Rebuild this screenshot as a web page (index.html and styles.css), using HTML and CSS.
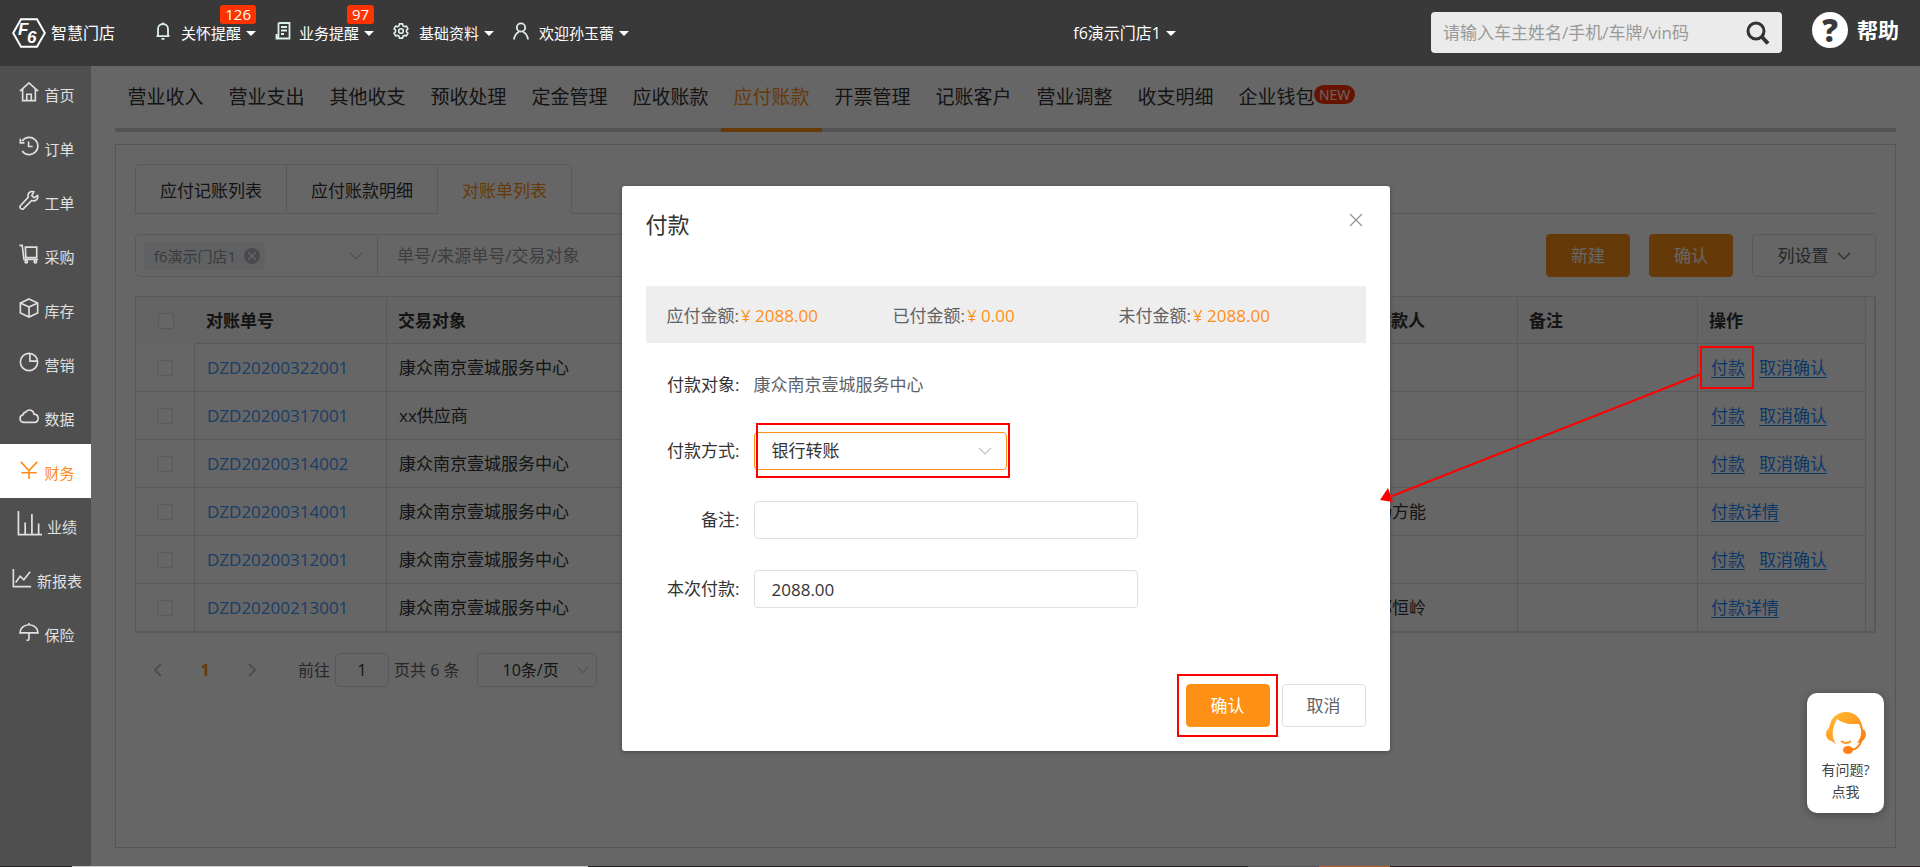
FILE: index.html
```html
<!DOCTYPE html>
<html lang="zh-CN">
<head>
<meta charset="utf-8">
<title>智慧门店</title>
<link rel="stylesheet" href="styles.css">
</head>
<body>
<svg class="defs" aria-hidden="true">
  <symbol id="chevron" viewBox="0 0 14 14"><path d="M1 4l6 6 6-6" fill="none" stroke="currentColor" stroke-width="1.2"/></symbol>
  <symbol id="cross" viewBox="0 0 14 14"><path d="M1 1l12 12M13 1L1 13" fill="none" stroke="currentColor" stroke-width="1.2"/></symbol>
</svg>

<header class="topbar">
  <a class="logo" href="#">
    <svg class="logo-mark" viewBox="0 0 34 30"><path d="M9 1.2h16L32.800 15 25 28.800H9L1.200 15z" fill="none" stroke="#fff" stroke-width="2"/><text x="6" y="17" class="logo-letter">F</text><text x="15" y="25" class="logo-letter">6</text></svg>
    <span>智慧门店</span>
  </a>
  <nav class="top-menu">
    <button class="top-item top-bell" type="button"><svg viewBox="0 0 16 18"><path d="M3 14V7a5 5 0 0 1 10 0v7M1.500 14.200h13M6.500 16.800h3M8 .5V2" /></svg><span>关怀提醒</span><i class="caret"></i><b class="count">126</b></button>
    <button class="top-item top-task" type="button"><svg viewBox="0 0 16 18"><path d="M3.500 1h11v15.500h-13V12M3.500 1v12.500c0 4-2 3-2 1M6 5h6M6 8.500h6M6 12h3"/></svg><span>业务提醒</span><i class="caret"></i><b class="count">97</b></button>
    <button class="top-item top-base" type="button"><svg viewBox="0 0 18 18"><path d="M7.300 1h3.400l.6 2.200 1.600.9 2.200-.6 1.700 3-1.600 1.600v1.800l1.600 1.600-1.700 3-2.200-.6-1.600.9-.6 2.200H7.300l-.6-2.200-1.600-.9-2.200.6-1.700-3 1.600-1.600V8.100L1.200 6.500l1.700-3 2.200.6 1.600-.9z"/><circle cx="9" cy="9" r="2.600"/></svg><span>基础资料</span><i class="caret"></i></button>
    <button class="top-item top-user" type="button"><svg viewBox="0 0 16 18"><circle cx="8" cy="5.500" r="4.200"/><path d="M1 17.500c.5-4.500 2.500-6.500 5-7.800M15 17.500c-.5-4.500-2.500-6.500-5-7.800"/></svg><span>欢迎孙玉蕾</span><i class="caret"></i></button>
  </nav>
  <button class="store" type="button">f6演示门店1<i class="caret"></i></button>
  <form class="search">
    <input type="text" aria-label="搜索" placeholder="请输入车主姓名/手机/车牌/vin码">
    <button type="button" aria-label="搜索"><svg viewBox="0 0 24 24"><circle cx="10" cy="10" r="8" fill="none" stroke="#333" stroke-width="3"/><path d="M16 16l6 6.500" stroke="#333" stroke-width="4"/></svg></button>
  </form>
  <a class="help" href="#"><span class="help-mark">?</span>帮助</a>
</header>

<div class="body">
  <nav class="sidebar">
    <a href="#"><svg viewBox="0 0 22 22"><path d="M1 10L11 1l10 9M4 8v12.500h14V8M8.500 20v-6.500h5V20"/></svg>首页</a>
    <a href="#"><svg viewBox="0 0 22 22"><path d="M3.500 5.500A9.500 9.500 0 1 1 3.500 16.500M1.500 3v4.500H6M10.500 6v5.500H15"/></svg>订单</a>
    <a href="#"><svg viewBox="0 0 22 22"><path d="M20.500 6l-4 2.500-2.500-2.300L16.300 2c-4-1.500-7.500 2-6 5.800L1.800 17a2 2 0 0 0 3.500 3.200L14 11.500c4 1.500 7.500-1.500 6.500-5.500z"/></svg>工单</a>
    <a href="#"><svg viewBox="0 0 22 22"><path d="M.5 1.500h3l2 15.500H21M7 3.500h12.500V15H7.500z"/><circle cx="8" cy="19.500" r="1.300"/><circle cx="18" cy="19.500" r="1.300"/></svg>采购</a>
    <a href="#"><svg viewBox="0 0 22 22"><path d="M11 1l9.500 4.500v11L11 21l-9.500-4.500v-11zM1.500 5.500L11 10l9.500-4.500M11 10v11"/></svg>库存</a>
    <a href="#"><svg viewBox="0 0 22 22"><circle cx="11" cy="11" r="9.500"/><path d="M12 1.500V10h8.500"/></svg>营销</a>
    <a href="#"><svg viewBox="0 0 22 22"><path d="M5 18a4.200 4.200 0 0 1-.5-8.300C5 7.500 6.500 6.800 7.500 6.800 9 3.500 15.500 3.200 16.500 9c6 .3 6 9 .5 9z"/></svg>数据</a>
    <a href="#" class="active"><svg viewBox="0 0 22 22"><path d="M2 2l9 9.500L20 2M11 11.500V21M2.500 14h17"/></svg>财务</a>
    <a href="#"><svg class="wide" viewBox="0 0 26 26"><path d="M1.500 0v24.500H26M8.500 24V12M15.500 24V3M22.500 24V13"/></svg>业绩</a>
    <a href="#"><svg viewBox="0 0 22 22"><path d="M1.500 1v19.500H21M4 16l5-7 4 4 7-9"/></svg>新报表</a>
    <a href="#"><svg viewBox="0 0 22 22"><path d="M1 12a10 9 0 0 1 20 0zM11 1v2M11 12v6.500c0 2-2 2-2.500 1"/></svg>保险</a>
  </nav>

  <main class="main">
    <nav class="main-tabs">
      <a href="#">营业收入</a><a href="#">营业支出</a><a href="#">其他收支</a><a href="#">预收处理</a><a href="#">定金管理</a><a href="#">应收账款</a><a href="#" class="active">应付账款</a><a href="#">开票管理</a><a href="#">记账客户</a><a href="#">营业调整</a><a href="#">收支明细</a><a href="#">企业钱包</a><span class="new">NEW</span>
    </nav>

    <section class="panel">
      <div class="sub-tabs"><a href="#">应付记账列表</a><a href="#">应付账款明细</a><a href="#" class="active">对账单列表</a></div>

      <div class="filters">
        <div class="filter-box">
          <div class="store-select">
            <span class="tag">f6演示门店1<button type="button" aria-label="移除"><svg viewBox="0 0 8 8"><path d="M0 0l8 8M8 0L0 8"/></svg></button></span>
            <svg class="chev"><use href="#chevron"/></svg>
          </div>
          <input type="text" aria-label="单号" placeholder="单号/来源单号/交易对象">
        </div>
        <button class="btn primary" type="button">新建</button>
        <button class="btn primary" type="button">确认</button>
        <button class="btn columns" type="button">列设置<svg><use href="#chevron"/></svg></button>
      </div>

      <div class="table-wrap">
        <table>
          <colgroup><col class="c-check"><col class="c-no"><col><col class="c-payer"><col class="c-note"><col class="c-ops"></colgroup>
          <thead><tr><th><input type="checkbox" aria-label="全选"></th><th class="first">对账单号</th><th>交易对象</th><th>付款人</th><th>备注</th><th>操作</th></tr></thead>
          <tbody>
            <tr><td><input type="checkbox" aria-label="选择"></td><td><a class="no" href="#">DZD20200322001</a></td><td>康众南京壹城服务中心</td><td></td><td></td><td class="ops"><a href="#">付款</a><a href="#">取消确认</a></td></tr>
            <tr><td><input type="checkbox" aria-label="选择"></td><td><a class="no" href="#">DZD20200317001</a></td><td>xx供应商</td><td></td><td></td><td class="ops"><a href="#">付款</a><a href="#">取消确认</a></td></tr>
            <tr><td><input type="checkbox" aria-label="选择"></td><td><a class="no" href="#">DZD20200314002</a></td><td>康众南京壹城服务中心</td><td></td><td></td><td class="ops"><a href="#">付款</a><a href="#">取消确认</a></td></tr>
            <tr><td><input type="checkbox" aria-label="选择"></td><td><a class="no" href="#">DZD20200314001</a></td><td>康众南京壹城服务中心</td><td>杨方能</td><td></td><td class="ops"><a href="#">付款详情</a></td></tr>
            <tr><td><input type="checkbox" aria-label="选择"></td><td><a class="no" href="#">DZD20200312001</a></td><td>康众南京壹城服务中心</td><td></td><td></td><td class="ops"><a href="#">付款</a><a href="#">取消确认</a></td></tr>
            <tr><td><input type="checkbox" aria-label="选择"></td><td><a class="no" href="#">DZD20200213001</a></td><td>康众南京壹城服务中心</td><td>邹恒岭</td><td></td><td class="ops"><a href="#">付款详情</a></td></tr>
          </tbody>
        </table>
      </div>

      <div class="pager">
        <button type="button" aria-label="上一页"><svg viewBox="0 0 10 14"><path d="M8 1L2 7l6 6"/></svg></button>
        <b>1</b>
        <button type="button" aria-label="下一页"><svg viewBox="0 0 10 14"><path d="M2 1l6 6-6 6"/></svg></button>
        <label class="jump">前往<input type="text" value="1">页共 6 条</label>
        <span class="size"><select aria-label="每页条数"><option>10条/页</option></select><svg><use href="#chevron"/></svg></span>
      </div>
    </section>

    <div class="backdrop">
      <form class="dialog">
        <div class="dialog-head"><h2>付款</h2><button type="button" aria-label="关闭"><svg><use href="#cross"/></svg></button></div>
        <div class="summary">
          <span>应付金额:<em>¥ 2088.00</em></span><span>已付金额:<em>¥ 0.00</em></span><span>未付金额:<em>¥ 2088.00</em></span>
        </div>
        <div class="field payee"><span class="name">付款对象:</span><span class="value">康众南京壹城服务中心</span></div>
        <div class="field"><label class="name" for="method">付款方式:</label><span class="method"><select id="method"><option>银行转账</option></select><svg><use href="#chevron"/></svg></span></div>
        <div class="field"><label class="name" for="note">备注:</label><input id="note" type="text"></div>
        <div class="field"><label class="name" for="amount">本次付款:</label><input id="amount" type="text" value="2088.00"></div>
        <div class="dialog-foot"><span class="confirm"><button class="btn primary" type="button">确认</button></span><button class="btn" type="button">取消</button></div>
      </form>
    </div>

    <svg class="pointer" viewBox="0 0 560 460" aria-hidden="true"><rect x="341" y="281" width="52" height="41" fill="none" stroke="#f00" stroke-width="2"/><path d="M341 308L32 430" stroke="#f00" stroke-width="2"/><path d="M20 434l8-12 5 14z" fill="#f00"/></svg>

    <a class="service" href="#">
      <svg viewBox="0 0 40 44">
        <defs><linearGradient id="hair" x1="0" y1="0" x2="1" y2="1"><stop offset="0" stop-color="#ffc233"/><stop offset="1" stop-color="#ff7a10"/></linearGradient></defs>
        <path d="M10 33C5 26 6 17 11 8c8 6 16 5 22 5 4 8 2 15-3 20l1-1c4 0 8-3 9-8 0-3-1-5-3-6C35 6 28 1 20 1S5 6 3 17c-2 2-3 4-3 6 0 4 3 7 6 7 1 1 2 2 4 3z" fill="url(#hair)"/>
        <path d="M15 30q5 4 10 0" fill="none" stroke="#ff9a20" stroke-width="2"/>
        <path d="M36 26c-1 8-5 13-13 13" fill="none" stroke="#ff7f14" stroke-width="2"/><ellipse cx="22" cy="39" rx="5" ry="4" fill="#ff7f14"/>
      </svg>
      <span>有问题?</span><span>点我</span>
    </a>
  </main>
</div>
<footer class="strip"></footer>
<script src="app.js"></script>
</body>
</html>
```
FILE: styles.css
```css
* { box-sizing: border-box; }
body {
  margin: 0;
  min-height: 100vh;
  display: flex;
  flex-direction: column;
  font: 17px/24px "Open Sans", "Noto Sans CJK SC", sans-serif;
  color: #333;
  background: #fff;
}
button, input, select { font: inherit; color: inherit; margin: 0; }
button { padding: 0; border: 0; background: none; cursor: pointer; }
a { color: inherit; text-decoration: none; }
svg { display: block; }
.defs { position: absolute; width: 0; height: 0; }

/* top bar */
.topbar { display: flex; align-items: center; height: 66px; background: #393939; color: #fff; font-size: 15px; }
.logo { display: flex; align-items: center; gap: 5px; margin-left: 12px; width: 143px; font-size: 16px; }
.logo-mark { width: 34px; height: 30px; }
.logo-letter { font: italic bold 17px "Liberation Sans", sans-serif; fill: #fff; }
.top-menu { display: flex; }
.top-item { position: relative; display: flex; align-items: center; color: #fff; }
.top-item svg { flex: none; width: 16px; height: 18px; margin: 0 8px 4px 0; fill: none; stroke: #dcf0ea; stroke-width: 1.8; }
.top-item .caret { margin-left: 5px; }
.top-bell, .top-task, .top-base { margin-right: 19px; }
.caret { border: 5px solid transparent; border-top-color: #fff; border-bottom: 0; }
.top-bell svg, .top-base svg, .top-user svg { margin-right: 10px; }
.count {
  position: absolute; right: 0; top: -16px; padding: 0 5px;
  border-radius: 3px; background: #ff3300; font-weight: 400; font-size: 15px; line-height: 19px;
}
.store { display: flex; align-items: center; gap: 5px; margin-left: auto; margin-right: 255px; color: #fff; font-size: 16px; }
.search { display: flex; align-items: center; width: 351px; height: 41px; margin-right: 30px; margin-bottom: 1px; padding: 0 12px; background: #ebebeb; border-radius: 4px; }
.search input { flex: 1; min-width: 0; border: 0; padding: 0; background: none; font-size: 17px; outline: 0; }
.search input::placeholder { color: #999; opacity: 1; }
.search svg { width: 24px; height: 24px; }
.help { display: flex; align-items: center; gap: 9px; margin: 0 21px 6px 0; font-size: 21px; font-weight: 700; }
.help-mark { width: 36px; height: 36px; border-radius: 50%; background: #fff; color: #393939; font-size: 31px; font-weight: 800; line-height: 36px; text-align: center; }

/* frame */
.body { flex: 1; display: flex; }
.sidebar { width: 91px; flex: none; background: #4f4f4f; }
.sidebar a { display: flex; align-items: center; justify-content: center; gap: 5px; height: 54px; padding: 3px 0 0 3px; color: #e0e0e0; font-size: 15px; }
.sidebar svg { width: 20px; height: 20px; margin-bottom: 6px; fill: none; stroke: currentColor; stroke-width: 1.8; }
.sidebar .wide { width: 25px; height: 25px; }
.sidebar .active { background: #fff; color: #ff8c1a; }
.main { position: relative; flex: 1; min-width: 0; display: flex; flex-direction: column; padding: 0 24px 18px; }
.strip { height: 1px; background: linear-gradient(90deg, #222 72px, #ccc 72px 588px, #222 588px 1248px, #555 1248px 1319px, #b9602a 1319px 1390px, #301a22 1390px); }

.main-tabs { display: flex; height: 66px; border-bottom: 4px solid #d0d0d0; font-size: 19px; }
.main-tabs a { width: 101px; height: 66px; line-height: 62px; text-align: center; }
.main-tabs .active { color: #ff9016; border-bottom: 4px solid #ff9016; }
.new { height: 19px; margin-top: 19px; margin-left: -13px; padding: 0 5px; border-radius: 10px; background: #ff3300; color: #fff; font-size: 14px; line-height: 19px; }

.panel { flex: 1; margin-top: 12px; padding: 19px 19px 0; border: 1px solid #d4d4d4; }
.sub-tabs { display: flex; height: 50px; border-bottom: 1px solid #dcdfe6; }
.sub-tabs a { height: 50px; padding: 0 24px; border: 1px solid #dcdfe6; border-right: 0; line-height: 52px; }
.sub-tabs a:first-child { border-top-left-radius: 5px; }
.sub-tabs .active { color: #ff9016; background: #fff; border-right: 1px solid #dcdfe6; border-bottom: 0; border-top-right-radius: 5px; }

.filters { display: flex; gap: 19px; margin-top: 20px; }
.filter-box { display: flex; width: 720px; height: 43px; margin-right: auto; border: 1px solid #dcdfe6; border-radius: 5px; }
.store-select { display: flex; align-items: center; width: 242px; padding: 0 14px 0 8px; border-right: 1px solid #dcdfe6; }
.tag { display: flex; align-items: center; gap: 8px; height: 28px; padding: 0 5px 0 10px; border-radius: 4px; background: #f0f2f5; color: #909399; font-size: 15px; }
.tag button { width: 16px; height: 16px; padding: 4px; border-radius: 50%; background: #b4b8c0; }
.tag svg { width: 8px; height: 8px; fill: none; stroke: #fff; stroke-width: 1.4; }
.chev { width: 14px; height: 14px; margin-left: auto; color: #c0c4cc; }
.filter-box input { flex: 1; border: 0; padding: 0 19px; background: none; }
.filter-box input::placeholder { color: #999; opacity: 1; }
.btn { width: 84px; height: 43px; border: 1px solid #dcdfe6; border-radius: 4px; background: #fff; color: #606266; }
.btn.primary { border-color: #ff9016; background: #ff9016; color: #fff; }
.columns { display: flex; align-items: center; justify-content: center; gap: 8px; width: 124px; }
.columns svg { width: 14px; height: 14px; }

.table-wrap { margin-top: 19px; padding-right: 8px; border: 1px solid #dcdfe6; border-width: 1px 2px 2px 1px; }
table { width: 100%; table-layout: fixed; border-collapse: separate; border-spacing: 0; }
.c-check { width: 59px; }
.c-no { width: 192px; }
.c-payer { width: 155px; }
.c-note { width: 180px; }
.c-ops { width: 168px; }
th, td { height: 48px; padding: 0 0 0 12px; border-right: 1px solid #dcdfe6; border-bottom: 1px solid #dcdfe6; text-align: left; }
th { height: 47px; padding: 2px 0 0 11px; background: #fafafa; font-weight: 700; }
th:first-child { border: 0; }
th:first-child, td:first-child { padding: 0; }
tbody tr:last-child td { height: 47px; border-bottom: 0; }
input[type="checkbox"] { display: block; appearance: none; width: 16px; height: 16px; margin: 0 auto; border: 1px solid #dcdfe6; border-radius: 2px; background: #fff; }
.no { color: #409eff; }
td.ops { padding-left: 13px; }
.ops a { margin-right: 14px; color: #1c8fff; text-decoration: underline; text-underline-offset: 3px; }

.pager { display: flex; align-items: center; margin-top: 20px; padding-left: 18px; color: #606266; font-size: 16px; }
.pager button svg { width: 10px; height: 14px; fill: none; stroke: #c0c4cc; stroke-width: 2; }
.pager b { width: 84px; text-align: center; color: #ff9016; }
.jump { display: flex; align-items: center; gap: 5px; margin-left: 41px; }
.jump input { width: 54px; height: 34px; padding: 0; border: 1px solid #dcdfe6; border-radius: 5px; color: #333; text-align: center; }
.size, .method { position: relative; display: block; }
.size { margin-left: 18px; }
.size select { display: block; appearance: none; width: 120px; height: 34px; padding: 0 24px; border: 1px solid #dcdfe6; border-radius: 4px; background: #fff; color: #333; }
.size svg, .method svg { position: absolute; top: 50%; right: 8px; width: 12px; height: 12px; margin-top: -6px; color: #c0c4cc; pointer-events: none; }

/* dialog */
.backdrop { position: absolute; inset: 0; display: flex; justify-content: center; align-items: flex-start; padding-top: 120px; background: rgba(0, 0, 0, .6); }
.dialog { width: 768px; padding: 24px; border-radius: 3px; background: #fff; box-shadow: 0 1px 4px rgba(0, 0, 0, .3); }
.dialog-head { display: flex; justify-content: space-between; align-items: flex-start; height: 76px; }
.dialog-head h2 { margin: 0; font-size: 22px; font-weight: 400; line-height: 28px; }
.dialog-head svg { width: 14px; height: 14px; margin: 3px 3px 0 0; color: #909399; }
.summary { display: flex; height: 57px; margin-bottom: 23px; padding-left: 21px; background: #eee; color: #606266; line-height: 59px; }
.summary span { width: 226px; }
.summary em { margin-left: 2px; font-style: normal; color: #ff9016; }
.field { display: flex; align-items: center; height: 38px; margin-bottom: 31px; }
.field.payee { margin-bottom: 28px; }
.field .name { width: 94px; margin-right: 14px; text-align: right; }
.value { color: #606266; }
.field input { width: 384px; height: 38px; padding: 0 17px; border: 1px solid #dcdfe6; border-radius: 4px; }
.method select { display: block; appearance: none; width: 253px; height: 38px; padding: 0 17px; border: 1px solid #ff9016; border-radius: 4px; background: #fff; }
.method svg { right: 15px; width: 14px; height: 14px; margin-top: -7px; }
.method::after { content: ""; position: absolute; inset: -9px -3px -8px 2px; border: 2px solid #f00; pointer-events: none; }
.dialog-foot { display: flex; justify-content: flex-end; gap: 12px; margin-top: 76px; }
.confirm { position: relative; display: block; }
.confirm::after { content: ""; position: absolute; inset: -10px -8px -10px -9px; border: 2px solid #f00; pointer-events: none; }

/* overlays */
.pointer { position: absolute; top: 0; right: 0; width: 560px; height: 460px; pointer-events: none; }
.service { position: absolute; right: 36px; bottom: 53px; display: flex; flex-direction: column; align-items: center; width: 77px; padding: 18px 0 10px; border-radius: 10px; background: #fff; box-shadow: 0 2px 8px rgba(0, 0, 0, .3); color: #444; font-size: 14px; line-height: 22px; }
.service svg { width: 40px; height: 44px; margin-bottom: 4px; }
```
FILE: app.js
```js
document.querySelectorAll('form').forEach(function (form) {
  form.addEventListener('submit', function (event) { event.preventDefault(); });
});
```
